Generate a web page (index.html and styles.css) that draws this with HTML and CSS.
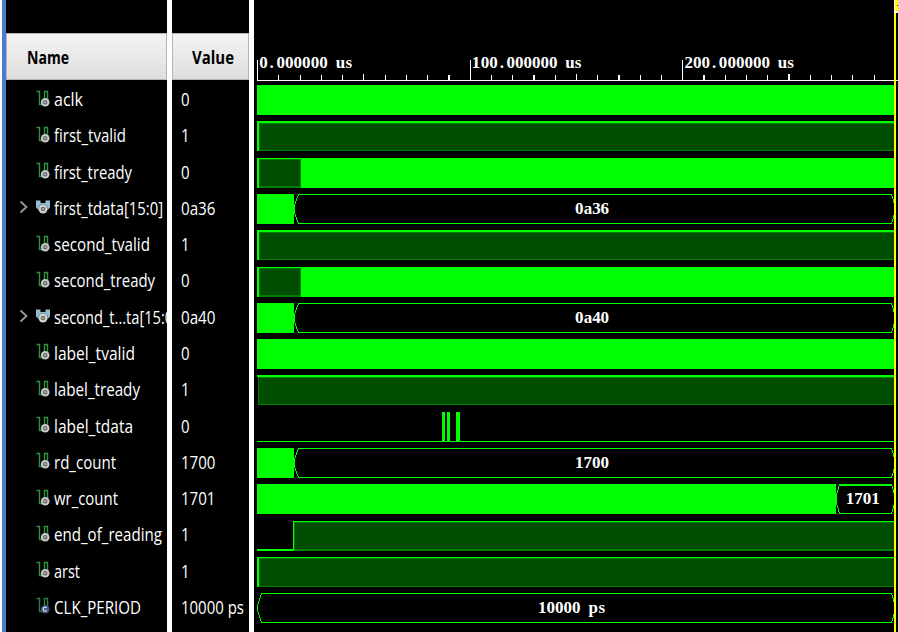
FILE: index.html
```html
<!DOCTYPE html>
<html lang="en">
<head>
<meta charset="utf-8">
<title>Waveform</title>
<link rel="stylesheet" href="styles.css">
</head>
<body>
<svg class="defs" aria-hidden="true">
  <symbol id="sig" viewBox="0 0 14 17"><path d="M.5 1.5H3.5V14.5H7M8.5 9V1.5H11.5V9" fill="none" stroke="#2f9440" stroke-width="1.4"/><circle cx="9.2" cy="12.2" r="4.3" fill="#c8c8c8"/><circle cx="9.2" cy="12.2" r="1.7" fill="#aaa" stroke="#666" stroke-width="1.1"/></symbol>
  <symbol id="const" viewBox="0 0 14 17"><path d="M.5 1.5H3.5V14.5H7M8.5 9V1.5H11.5V9" fill="none" stroke="#2f8040" stroke-width="1.4"/><circle cx="9.2" cy="12.2" r="4.3" fill="#3d5681"/><path d="M10.7 10.9a2 2 0 1 0 0 2.6" fill="none" stroke="#dde" stroke-width="1.2"/></symbol>
  <symbol id="bus" viewBox="0 0 14 17"><path d="M0 2.5H4.5V5H9.5V2.5H14V9.5L11.5 12H2.5L0 9.5Z" fill="#91bdd5"/><circle cx="7" cy="11" r="5.2" fill="#000" opacity=".35"/><circle cx="7" cy="11" r="4.5" fill="#d0d0d0"/><circle cx="7" cy="11" r="1.7" fill="#aaa" stroke="#666" stroke-width="1.1"/></symbol>
  <symbol id="chev" viewBox="0 0 10 14"><path d="M1.5 1.5L7.5 7L1.5 12.5" fill="none" stroke="#999" stroke-width="1.8"/></symbol>
</svg>
<main class="viewer">
  <div class="edge"></div>
  <section class="pane names">
    <header class="head"><svg class="label"><text y="20" lengthAdjust="spacingAndGlyphs" textLength="42">Name</text></svg></header>
    <div class="row"><i class="chev"></i><svg class="icon"><use href="#sig"/></svg><svg class="label"><text y="20" lengthAdjust="spacingAndGlyphs" textLength="29">aclk</text></svg></div>
    <div class="row"><i class="chev"></i><svg class="icon"><use href="#sig"/></svg><svg class="label"><text y="20" lengthAdjust="spacingAndGlyphs" textLength="72">first_tvalid</text></svg></div>
    <div class="row"><i class="chev"></i><svg class="icon"><use href="#sig"/></svg><svg class="label"><text y="20" lengthAdjust="spacingAndGlyphs" textLength="78">first_tready</text></svg></div>
    <div class="row"><svg class="chev"><use href="#chev"/></svg><svg class="icon"><use href="#bus"/></svg><svg class="label"><text y="20" lengthAdjust="spacingAndGlyphs" textLength="109">first_tdata[15:0]</text></svg></div>
    <div class="row"><i class="chev"></i><svg class="icon"><use href="#sig"/></svg><svg class="label"><text y="20" lengthAdjust="spacingAndGlyphs" textLength="96">second_tvalid</text></svg></div>
    <div class="row"><i class="chev"></i><svg class="icon"><use href="#sig"/></svg><svg class="label"><text y="20" lengthAdjust="spacingAndGlyphs" textLength="101">second_tready</text></svg></div>
    <div class="row"><svg class="chev"><use href="#chev"/></svg><svg class="icon"><use href="#bus"/></svg><svg class="label"><text y="20" lengthAdjust="spacingAndGlyphs" textLength="124">second_t...ta[15:0]</text></svg></div>
    <div class="row"><i class="chev"></i><svg class="icon"><use href="#sig"/></svg><svg class="label"><text y="20" lengthAdjust="spacingAndGlyphs" textLength="81">label_tvalid</text></svg></div>
    <div class="row"><i class="chev"></i><svg class="icon"><use href="#sig"/></svg><svg class="label"><text y="20" lengthAdjust="spacingAndGlyphs" textLength="86">label_tready</text></svg></div>
    <div class="row"><i class="chev"></i><svg class="icon"><use href="#sig"/></svg><svg class="label"><text y="20" lengthAdjust="spacingAndGlyphs" textLength="79">label_tdata</text></svg></div>
    <div class="row"><i class="chev"></i><svg class="icon"><use href="#sig"/></svg><svg class="label"><text y="20" lengthAdjust="spacingAndGlyphs" textLength="62">rd_count</text></svg></div>
    <div class="row"><i class="chev"></i><svg class="icon"><use href="#sig"/></svg><svg class="label"><text y="20" lengthAdjust="spacingAndGlyphs" textLength="64">wr_count</text></svg></div>
    <div class="row"><i class="chev"></i><svg class="icon"><use href="#sig"/></svg><svg class="label"><text y="20" lengthAdjust="spacingAndGlyphs" textLength="108">end_of_reading</text></svg></div>
    <div class="row"><i class="chev"></i><svg class="icon"><use href="#sig"/></svg><svg class="label"><text y="20" lengthAdjust="spacingAndGlyphs" textLength="26">arst</text></svg></div>
    <div class="row"><i class="chev"></i><svg class="icon"><use href="#const"/></svg><svg class="label"><text y="20" lengthAdjust="spacingAndGlyphs" textLength="87">CLK_PERIOD</text></svg></div>
  </section>
  <section class="pane values">
    <header class="head"><svg class="label"><text y="20" lengthAdjust="spacingAndGlyphs" textLength="42">Value</text></svg></header>
    <div class="row"><svg class="label"><text y="20" lengthAdjust="spacingAndGlyphs" textLength="8.6">0</text></svg></div>
    <div class="row"><svg class="label"><text y="20" lengthAdjust="spacingAndGlyphs" textLength="8.6">1</text></svg></div>
    <div class="row"><svg class="label"><text y="20" lengthAdjust="spacingAndGlyphs" textLength="8.6">0</text></svg></div>
    <div class="row"><svg class="label"><text y="20" lengthAdjust="spacingAndGlyphs" textLength="34.5">0a36</text></svg></div>
    <div class="row"><svg class="label"><text y="20" lengthAdjust="spacingAndGlyphs" textLength="8.6">1</text></svg></div>
    <div class="row"><svg class="label"><text y="20" lengthAdjust="spacingAndGlyphs" textLength="8.6">0</text></svg></div>
    <div class="row"><svg class="label"><text y="20" lengthAdjust="spacingAndGlyphs" textLength="34.5">0a40</text></svg></div>
    <div class="row"><svg class="label"><text y="20" lengthAdjust="spacingAndGlyphs" textLength="8.6">0</text></svg></div>
    <div class="row"><svg class="label"><text y="20" lengthAdjust="spacingAndGlyphs" textLength="8.6">1</text></svg></div>
    <div class="row"><svg class="label"><text y="20" lengthAdjust="spacingAndGlyphs" textLength="8.6">0</text></svg></div>
    <div class="row"><svg class="label"><text y="20" lengthAdjust="spacingAndGlyphs" textLength="34.5">1700</text></svg></div>
    <div class="row"><svg class="label"><text y="20" lengthAdjust="spacingAndGlyphs" textLength="34.5">1701</text></svg></div>
    <div class="row"><svg class="label"><text y="20" lengthAdjust="spacingAndGlyphs" textLength="8.6">1</text></svg></div>
    <div class="row"><svg class="label"><text y="20" lengthAdjust="spacingAndGlyphs" textLength="8.6">1</text></svg></div>
    <div class="row"><svg class="label"><text y="20" lengthAdjust="spacingAndGlyphs" textLength="63">10000 ps</text></svg></div>
  </section>
  <section class="pane waves">
    <svg class="plot" viewBox="254 0 644 632" shape-rendering="crispEdges">
      <!-- time ruler -->
      <path class="tick" d="M257 80H898V81H257ZM257 60h1v20h-1zM470 60h1v20h-1zM682 60h1v20h-1zM278 75h1v5h-1zM300 75h1v5h-1zM321 75h1v5h-1zM342 75h1v5h-1zM363 74h1v6h-1zM385 75h1v5h-1zM406 75h1v5h-1zM427 75h1v5h-1zM448 75h2v5h-2zM491 75h1v5h-1zM512 75h1v5h-1zM533 75h2v5h-2zM555 75h1v5h-1zM576 74h1v6h-1zM597 75h1v5h-1zM618 75h2v5h-2zM640 75h1v5h-1zM661 75h1v5h-1zM703 75h2v5h-2zM725 75h1v5h-1zM746 75h1v5h-1zM767 75h1v5h-1zM788 74h2v6h-2zM810 75h1v5h-1zM831 75h1v5h-1zM852 75h1v5h-1zM874 75h1v5h-1z"/>
      <g class="mono">
        <text y="68" x="259.3 269.5 276.4 285 293.6 302.1 310.7 319.3 327 335.8 345.6">0.000000 us</text>
        <text y="68" x="471.8 480.7 489.2 499.7 506.4 515 523.5 532.1 540.6 549.1 557 565.3 574.8">100.000000 us</text>
        <text y="68" x="684.4 693.1 701.6 712.1 718.8 727.4 735.9 744.5 753 761.5 769 777.7 787.2">200.000000 us</text>
      </g>
      <!-- busy signals -->
      <path class="hi" d="M257 85H894V115H257ZM301 158H894V188H301ZM257 194H294V224H257ZM301 267H894V297H301ZM257 303H294V333H257ZM257 339H894V369H257ZM257 448H294V478H257ZM257 484H836V514H257Z"/>
      <!-- steady high signals -->
      <path class="hi" d="M257 121H894V123H259V151H257ZM257 158H301V159H259V188H257ZM257 230H894V232H259V260H257ZM257 267H301V268H259V297H257ZM257 375H894V377H257ZM257 557H894V558H259V587H257ZM257 549H293V521H894V522H294V551H257Z"/>
      <path class="mid" d="M259 123H894V151H259ZM259 159H301V188H259ZM259 232H894V260H259ZM259 268H301V297H259ZM258 377H894V405H258ZM259 558H894V587H259ZM294 522H894V551H294Z"/>
      <path class="lo" d="M260 124H894V150H260ZM260 160H300V186H260ZM260 233H894V259H260ZM260 269H300V295H260ZM259 378H894V404H259ZM260 559H894V586H260ZM295 523H894V549H295Z"/>
      <!-- label_tdata pulses -->
      <path class="hi" d="M257 441H894V442H257ZM442 412h3v30h-3zM447 412h3v30h-3zM456 412h4v30h-4z"/>
      <!-- bus values -->
      <path class="hex" d="M298.5 194.5H891.5L894.5 204V214L891.5 223.5H298.5L294.5 213V205ZM298.5 303.5H891.5L894.5 313V323L891.5 332.5H298.5L294.5 322V314ZM298.5 448.5H891.5L894.5 458V468L891.5 477.5H298.5L294.5 467V459ZM839.5 484.5H891.5L894.5 494V504L891.5 513.5H839.5L836.5 503V495ZM261.5 593.5H891.5L894.5 603V613L891.5 622.5H261.5L257.5 610V606Z"/>
      <path class="hi" d="M839 484h53v2h-53z"/>
      <g class="mono">
        <text y="214" x="574.9 583.7 592.2 600.6">0a36</text>
        <text y="323" x="574.9 583.7 592.2 600.6">0a40</text>
        <text y="468" x="574.9 583.4 592 600.5">1700</text>
        <text y="504" x="845.8 854.3 862.8 871.3">1701</text>
        <text y="613" x="538 546.5 555 563.5 572 582 588.5 598.6">10000 ps</text>
      </g>
      <!-- time cursor -->
      <path fill="#fff" d="M894 0h4v13h-4z"/>
      <path fill="#ff0" d="M895 0h3v11h-3zM894 13h2v619h-2z"/>
      <path fill="#222" d="M897 5h1v1h-1z"/>
    </svg>
  </section>
</main>
</body>
</html>
```
FILE: styles.css
```css
body {
  margin: 0;
  background: #fff;
  overflow: hidden;
}

.defs {
  display: none;
}

.viewer {
  display: grid;
  grid-template-columns: 4px 156px 77px 644px;
  column-gap: 5px;
  width: 896px;
  height: 632px;
  padding-left: 2px;
}

.edge {
  background: #4a7dcb;
}

.names {
  margin-left: -5px;
  width: 161px;
}

.pane {
  background: #000;
  overflow: hidden;
  height: 632px;
}

.head {
  box-sizing: border-box;
  height: 47px;
  margin-top: 33px;
  margin-bottom: 2px;
  padding: 10px 0 0 20px;
  border: 1px solid #b5b5b8;
  background: linear-gradient(#f4f4f4, #dededf);
}

.values .head {
  padding-left: 19px;
}

.row {
  display: flex;
  align-items: center;
  height: 36.27px;
}

.names .row {
  padding-left: 13px;
}

.values .row {
  padding-left: 9px;
}

.chev {
  flex: none;
  width: 10px;
  height: 14px;
  margin: -3px 7px 0 0;
}

.icon {
  flex: none;
  width: 14px;
  height: 17px;
  margin: -4px 4px 0 0;
}

.label {
  flex: none;
  display: block;
  width: 130px;
  height: 28px;
  overflow: visible;
  font: 17.6px "Open Sans", "Noto Sans", sans-serif;
  fill: #fff;
}

.head .label {
  font-weight: 700;
  font-size: 17px;
  fill: #000;
}

.plot {
  display: block;
  width: 644px;
  height: 632px;
}

.mono {
  font: 700 17px "Liberation Serif", serif;
  fill: #fff;
}

.tick { fill: #fff; }
.hi { fill: #0f0; }
.mid { fill: #008000; }
.lo { fill: #004c00; }
.hex { fill: none; stroke: #0f0; stroke-width: 1; }
```
